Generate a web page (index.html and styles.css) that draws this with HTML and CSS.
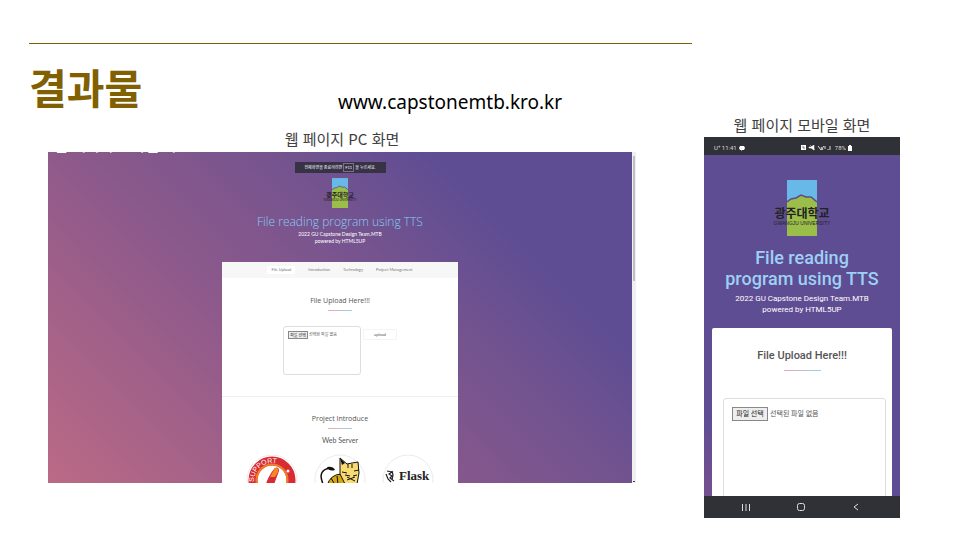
FILE: index.html
```html
<!DOCTYPE html>
<html lang="ko">
<head>
<meta charset="utf-8">
<title>결과물</title>
<link rel="stylesheet" href="styles.css">
</head>
<body>
<svg class="defs" aria-hidden="true">
  <symbol id="crest" viewBox="0 0 30 56">
    <rect width="30" height="56" fill="#68b9e8"/>
    <path d="M0 22 L4 19 L9 18 L14 15 L19 17 L24 17 L30 22 V56 H0Z" fill="#9bbd4a"/>
    <path d="M0 22 L4 19 L9 18 L14 15 L19 17 L24 17 L30 22" fill="none" stroke="#5d4d83" stroke-width="1.5"/>
  </symbol>
</svg>
<main class="slide">
  <section class="main-col">
    <hr class="rule">
    <h1 class="title">결과물</h1>
    <p class="address">www.capstonemtb.kro.kr</p>
    <figure class="figure">
      <figcaption class="caption">웹 페이지 PC 화면</figcaption>
      <div class="stage">
      <div class="desktop">
        <div class="page">
          <p class="hint">전체화면을 종료하려면 <kbd class="key">F11</kbd> 을 누르세요.</p>
          <div class="brand">
            <svg class="crest"><use href="#crest"/></svg>
            <div class="brand-text"><b class="brand-ko">광주대학교</b><span class="brand-en">GWANGJU UNIVERSITY</span></div>
          </div>
          <h2 class="headline">File reading program using TTS</h2>
          <p class="byline">2022 GU Capstone Design Team.MTB<br>powered by HTML5UP</p>
          <div class="sheet">
            <nav class="nav">
              <a class="link current" href="#upload">File Upload</a>
              <a class="link" href="#intro">Introduction</a>
              <a class="link" href="#tech">Technology</a>
              <a class="link" href="#manage">Project Management</a>
            </nav>
            <section class="upload" id="upload">
              <h3 class="heading">File Upload Here!!!</h3>
              <div class="form">
                <div class="drop"><button class="pick" type="button">파일 선택</button><span>선택된 파일 없음</span></div>
                <button class="send" type="button">upload</button>
              </div>
            </section>
            <section class="intro" id="intro">
              <h3 class="heading">Project Introduce</h3>
              <p class="sub">Web Server</p>
              <div class="logos">
                <svg class="logo" viewBox="0 0 52 52" role="img" aria-label="Support">
                  <defs><path id="arc" d="M8 28 A18 18 0 0 1 44 26"/></defs>
                  <circle cx="26" cy="26" r="25" fill="#fff" stroke="#ececec"/>
                  <circle cx="26" cy="26" r="19" fill="none" stroke="#d92c32" stroke-width="9"/>
                  <circle cx="26" cy="26" r="15.500" fill="none" stroke="#f07c28" stroke-width="2"/>
                  <text class="arc-text"><textPath href="#arc">SUPPORT</textPath></text>
                  <circle cx="42" cy="17" r="1.500" fill="#fff"/>
                  <path d="M19 33 C21 25 26 17 29 14 Q33 12 33 17 L27 33Z" fill="#d82935"/>
                  <path d="M24 23 L29 14 Q33 13 32 18 L29 23Z" fill="#f28b27"/>
                </svg>
                <svg class="logo" viewBox="0 0 52 52" role="img" aria-label="Tomcat">
                  <circle cx="26" cy="26" r="25" fill="#fff" stroke="#ececec"/>
                  <path d="M13 32 Q16 20 28 20 L35 30Z" fill="#d6a514" stroke="#111"/>
                  <path d="M26 4 L33 10 L38 9 L44 8 L45 19 L43 30 H31 L26 20Z" fill="#fadb72" stroke="#111"/>
                  <path d="M26 4 L31 9 L28 11Z" fill="#111"/>
                  <path d="M34 10v4 M38 10v4 M28 18l5 1 M40 17l5 -1 M31 21l5 1 M39 22l4-1 M33 26l8-3 M33 23l8 4 M17 24l3 5 M23 22l1 8" fill="none" stroke="#111"/>
                  <path d="M9 30 Q3 16 16 14" fill="none" stroke="#111" stroke-width="1.500"/>
                  <path d="M13 13 Q19 12 21 16 Q15 18 13 13Z" fill="#111"/>
                </svg>
                <svg class="logo" viewBox="0 0 52 52" role="img" aria-label="Flask">
                  <circle cx="26" cy="26" r="25" fill="#fff" stroke="#ececec"/>
                  <path d="M5 17l5 1-3 2 3 2-2 2 4 3M10 17l1 4-1 5M4 20l2 5 3 3" fill="none" stroke="#222" stroke-width="1.200"/>
                  <text class="flask-text" x="17" y="26">Flask</text>
                </svg>
              </div>
            </section>
          </div>
        </div>
        <div class="track"><div class="thumb"></div><div class="track-end"></div></div>
      </div>
      <p class="ghost">웹 페이지 모바일 화면</p>
      </div>
    </figure>
  </section>
  <figure class="figure side-col">
    <figcaption class="caption">웹 페이지 모바일 화면</figcaption>
    <div class="phone">
      <div class="status">
        <div class="status-group"><span>U⁺ 11:41</span>
          <svg class="chat" viewBox="0 0 6 6"><path d="M1 1H5L6 3L5 5H3L2 6V5H1L0 3Z" fill="#fff"/></svg></div>
        <div class="status-group">
          <svg class="signs" viewBox="0 0 32 6"><rect width="5" height="5" fill="#fff"/><path d="M2 1v2h2" fill="none" stroke="#777"/><path d="M8 2h2l3-2v5l-3-2H8zM9 0l5 5" fill="#fff" stroke="#fff" stroke-width=".5"/><path d="M17 1l3 4 3-4M20 2l2 3M24 4V1M29 5V1M27 5V4" fill="none" stroke="#ddd"/></svg>
          <span>78%</span>
          <svg class="battery" viewBox="0 0 4 6"><path d="M0 1H1V0H3V1H4V6H0Z" fill="#fff"/></svg></div>
      </div>
      <div class="mobile">
        <div class="brand">
          <svg class="crest"><use href="#crest"/></svg>
          <div class="brand-text"><b class="brand-ko">광주대학교</b><span class="brand-en">GWANGJU UNIVERSITY</span></div>
        </div>
        <h2 class="headline">File reading program using TTS</h2>
        <p class="byline">2022 GU Capstone Design Team.MTB<br>powered by HTML5UP</p>
        <div class="sheet">
          <h3 class="heading">File Upload Here!!!</h3>
          <div class="drop"><button class="pick" type="button">파일 선택</button><span>선택된 파일 없음</span></div>
        </div>
      </div>
      <div class="softkeys">
        <button class="softkey" type="button" aria-label="최근 앱"><svg viewBox="0 0 10 10"><path d="M1.500 2v7M5 2v7M8.500 2v7"/></svg></button>
        <button class="softkey" type="button" aria-label="홈"><svg viewBox="0 0 10 10"><rect x="1.500" y="1.500" width="7" height="7" rx="2"/></svg></button>
        <button class="softkey" type="button" aria-label="뒤로"><svg viewBox="0 0 10 10"><path d="M7 2L3 5l4 3"/></svg></button>
      </div>
    </div>
  </figure>
</main>
</body>
</html>
```
FILE: styles.css
```css
* { box-sizing: border-box; }
body, h1, h2, h3, p, figure { margin: 0; }
body {
  background: #fff;
  color: #404040;
  font-family: "Noto Sans", "Noto Sans CJK KR", sans-serif;
}
button { margin: 0; font-family: inherit; }
.defs { position: absolute; width: 0; height: 0; }

.slide {
  display: grid;
  grid-template-columns: 663fr 196fr;
  column-gap: 12px;
  padding: 43px 60px 20px 29px;
}
.main-col { min-width: 0; }
.rule { height: 1px; margin: 0; border: 0; background: #806000; }
.title { margin-top: 12px; color: #806000; font: 700 41px/60px "Noto Sans CJK KR", sans-serif; }
.address { margin-top: -26px; padding-left: 309px; color: #000; font-size: 19px; line-height: 24px; }
.main-col .figure { margin: 11px 56px 0 19px; }
.caption {
  text-align: center;
  font: 400 15px/28px "Noto Sans CJK KR", sans-serif;
  height: 26px;
}
.side-col { padding-top: 68px; }

.stage { position: relative; margin-top: 1px; }
.desktop {
  display: flex;
  height: 331px;
  overflow: hidden;
  background: linear-gradient(45deg, #bb6a85 0%, #8f5a8b 36%, #73538f 62%, #5f4d93 77%);
  font-family: Lato, "Noto Sans CJK KR", sans-serif;
}
.ghost { position: absolute; left: 6px; top: -15px; color: #fff; font: 400 15px/16px "Noto Sans CJK KR", sans-serif; }
.page { flex: 1; display: flex; flex-direction: column; align-items: center; padding-top: 10px; color: #fff; }
.hint { padding: 0 9px; background: #373246; font-size: 4px; line-height: 11px; width: 91px; white-space: nowrap; text-align: center; }
.key { padding: 1px; border: 1px solid #777287; font: inherit; }
.brand { display: grid; place-items: center; color: #222; line-height: 1; }
.brand > * { grid-area: 1 / 1; }
.brand-text { display: grid; justify-items: center; white-space: nowrap; }
.desktop .brand { margin-top: 5px; }
.desktop .crest { width: 16px; height: 30px; }
.desktop .brand-ko { font-size: 6px; line-height: 6px; margin-top: 8px; }
.desktop .brand-en { font-size: 3px; line-height: 4px; }
.desktop .headline { margin-top: 4px; color: #85cdf8; font: 300 12px/19px "Open Sans", sans-serif; }
.desktop .byline { font-size: 5px; line-height: 7px; text-align: center; }
.desktop .sheet { width: 236px; margin-top: 17px; flex: 1; border-radius: 2px 2px 0 0; background: #fff; color: #555; }
.nav { display: flex; align-items: center; justify-content: center; gap: 13px; height: 16px; background: #f7f7f7; font-size: 4px; line-height: 8px; }
.link { color: #777; text-decoration: none; }
.current { padding: 0 4px; border-radius: 2px; background: #fff; }
.heading { color: #555; font-weight: 400; text-align: center; }
.heading::after { content: ""; display: block; height: 1px; margin: 0 auto; background: linear-gradient(90deg, #efa8b0, #9bd0ed); }
.desktop .heading { font-family: "Open Sans", sans-serif; font-size: 7px; line-height: 16px; }
.desktop .heading::after { width: 24px; margin-top: 1px; }
.upload { height: 119px; padding-top: 15px; border-bottom: 1px solid #eee; }
.form { display: flex; gap: 2px; padding: 15px 60px 0 61px; }
.drop { border: 1px solid #ddd; border-radius: 3px; white-space: nowrap; color: #555; }
.pick { border: 1px solid #888; background: #eee; color: #222; }
.desktop .drop { width: 78px; height: 49px; padding: 4px; display: flex; gap: 1px; font-size: 4px; line-height: 8px; }
.desktop .pick { width: 20px; height: 8px; padding: 0; font-size: 4px; line-height: 5px; }
.send { width: 34px; height: 11px; margin-top: 3px; padding: 0; border: 1px solid #f4f4f4; border-radius: 1px; background: #fff; color: #555; font-size: 4px; line-height: 8px; }
.intro { padding-top: 14px; }
.sub { font-size: 7px; line-height: 10px; text-align: center; margin-top: 6px; }
.logos { display: flex; justify-content: center; gap: 16px; margin-top: 9px; }
.logo { width: 52px; height: 52px; }
.arc-text { fill: #fff; font: 7px "Liberation Sans", sans-serif; }
.flask-text { fill: #222; font: 700 13px "Liberation Serif", serif; }
.track { width: 4px; padding: 4px 1px 1px; background: #f0eff2; display: flex; flex-direction: column; justify-content: space-between; }
.thumb { height: 125px; background: #bfc0c4; }
.track-end { height: 1px; background: #444; }

.phone { height: 381px; display: flex; flex-direction: column; background: #5f4d93; }
.status { display: flex; justify-content: space-between; align-items: center; height: 18px; padding: 4px 48px 0 10px; background: #303136; color: #ddd; font: 6px/8px Roboto, sans-serif; }
.status-group { display: flex; align-items: center; gap: 2px; }
.chat { width: 6px; height: 6px; }
.signs { width: 32px; height: 6px; }
.battery { width: 4px; height: 6px; }
.mobile { flex: 1; min-height: 0; padding: 25px 8px 0; overflow: hidden; color: #fff; font-family: Roboto, "Noto Sans CJK KR", sans-serif; background: linear-gradient(45deg, #75508f, #5f4d93 15%); }
.mobile .crest { width: 30px; height: 56px; }
.mobile .brand-ko { font: 700 12px/13px "Noto Sans CJK KR", sans-serif; margin-top: 16px; }
.mobile .brand-en { font: 5px/8px "Liberation Sans", sans-serif; }
.mobile .headline { margin-top: 11px; padding: 0 10px; color: #9dd0f5; font-size: 18px; line-height: 21px; font-weight: 500; text-align: center; }
.mobile .byline { margin-top: 4px; font-size: 8px; line-height: 11px; text-align: center; }
.mobile .sheet { margin-top: 13px; height: 180px; padding: 18px 6px 0 6px; border-radius: 2px; background: #fff; }
.mobile .heading { font-size: 11px; line-height: 20px; font-weight: 500; }
.mobile .heading::after { width: 37px; margin-top: 4px; }
.mobile .drop { height: 120px; margin: 27px 0 0 5px; padding: 8px; display: flex; align-items: flex-start; gap: 2px; font-size: 7px; line-height: 14px; }
.mobile .pick { width: 36px; height: 14px; padding: 0; font-size: 7px; line-height: 10px; }
.softkeys { display: flex; justify-content: center; gap: 45px; height: 22px; padding: 6px 2px 0 0; background: #303136; }
.softkey { width: 10px; height: 10px; padding: 0; border: 0; background: none; }
.softkey svg { display: block; width: 10px; height: 10px; fill: none; stroke: #ddd; stroke-width: 1; }
```
